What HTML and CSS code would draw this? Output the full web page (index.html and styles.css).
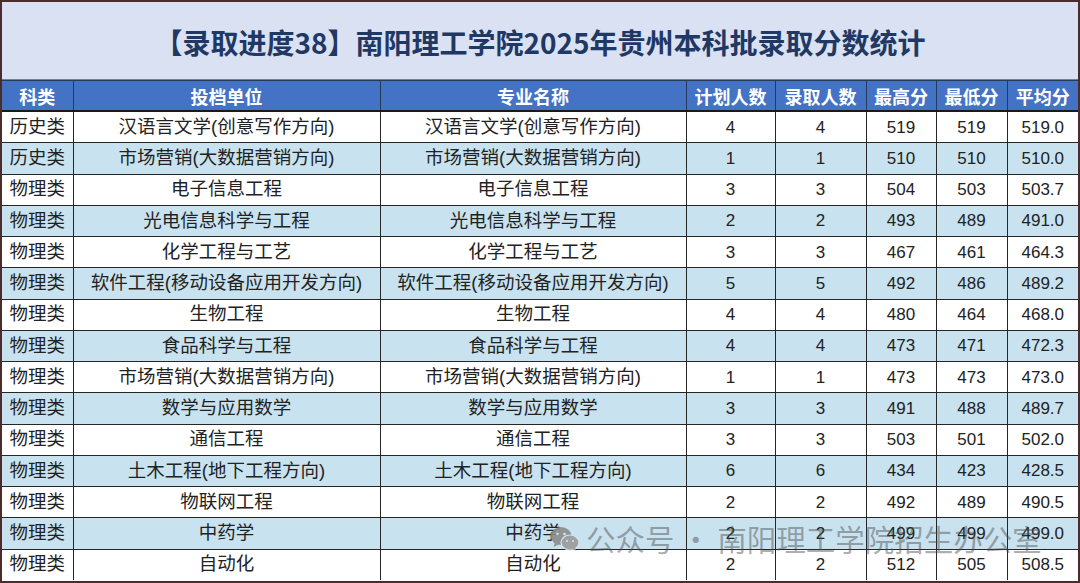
FILE: index.html
```html
<!DOCTYPE html>
<html lang="zh">
<head>
<meta charset="utf-8">
<link rel="stylesheet" href="styles.css">
</head>
<body>
<div class="frame">
  <div class="title">【录取进度38】南阳理工学院2025年贵州本科批录取分数统计</div>
  <table class="grid">
    <colgroup>
      <col class="c1"><col class="c2"><col class="c3"><col class="c4"><col class="c5"><col class="c6"><col class="c7"><col class="c8">
    </colgroup>
    <thead>
      <tr><th>科类</th><th>投档单位</th><th>专业名称</th><th>计划人数</th><th>录取人数</th><th>最高分</th><th>最低分</th><th>平均分</th></tr>
    </thead>
    <tbody>
      <tr><td>历史类</td><td>汉语言文学(创意写作方向)</td><td>汉语言文学(创意写作方向)</td><td class="n">4</td><td class="n">4</td><td class="n">519</td><td class="n">519</td><td class="n">519.0</td></tr>
      <tr><td>历史类</td><td>市场营销(大数据营销方向)</td><td>市场营销(大数据营销方向)</td><td class="n">1</td><td class="n">1</td><td class="n">510</td><td class="n">510</td><td class="n">510.0</td></tr>
      <tr><td>物理类</td><td>电子信息工程</td><td>电子信息工程</td><td class="n">3</td><td class="n">3</td><td class="n">504</td><td class="n">503</td><td class="n">503.7</td></tr>
      <tr><td>物理类</td><td>光电信息科学与工程</td><td>光电信息科学与工程</td><td class="n">2</td><td class="n">2</td><td class="n">493</td><td class="n">489</td><td class="n">491.0</td></tr>
      <tr><td>物理类</td><td>化学工程与工艺</td><td>化学工程与工艺</td><td class="n">3</td><td class="n">3</td><td class="n">467</td><td class="n">461</td><td class="n">464.3</td></tr>
      <tr><td>物理类</td><td>软件工程(移动设备应用开发方向)</td><td>软件工程(移动设备应用开发方向)</td><td class="n">5</td><td class="n">5</td><td class="n">492</td><td class="n">486</td><td class="n">489.2</td></tr>
      <tr><td>物理类</td><td>生物工程</td><td>生物工程</td><td class="n">4</td><td class="n">4</td><td class="n">480</td><td class="n">464</td><td class="n">468.0</td></tr>
      <tr><td>物理类</td><td>食品科学与工程</td><td>食品科学与工程</td><td class="n">4</td><td class="n">4</td><td class="n">473</td><td class="n">471</td><td class="n">472.3</td></tr>
      <tr><td>物理类</td><td>市场营销(大数据营销方向)</td><td>市场营销(大数据营销方向)</td><td class="n">1</td><td class="n">1</td><td class="n">473</td><td class="n">473</td><td class="n">473.0</td></tr>
      <tr><td>物理类</td><td>数学与应用数学</td><td>数学与应用数学</td><td class="n">3</td><td class="n">3</td><td class="n">491</td><td class="n">488</td><td class="n">489.7</td></tr>
      <tr><td>物理类</td><td>通信工程</td><td>通信工程</td><td class="n">3</td><td class="n">3</td><td class="n">503</td><td class="n">501</td><td class="n">502.0</td></tr>
      <tr><td>物理类</td><td>土木工程(地下工程方向)</td><td>土木工程(地下工程方向)</td><td class="n">6</td><td class="n">6</td><td class="n">434</td><td class="n">423</td><td class="n">428.5</td></tr>
      <tr><td>物理类</td><td>物联网工程</td><td>物联网工程</td><td class="n">2</td><td class="n">2</td><td class="n">492</td><td class="n">489</td><td class="n">490.5</td></tr>
      <tr><td>物理类</td><td>中药学</td><td>中药学</td><td class="n">2</td><td class="n">2</td><td class="n">499</td><td class="n">499</td><td class="n">499.0</td></tr>
      <tr><td>物理类</td><td>自动化</td><td>自动化</td><td class="n">2</td><td class="n">2</td><td class="n">512</td><td class="n">505</td><td class="n">508.5</td></tr>
    </tbody>
  </table>
  <div class="watermark">
    <svg class="wm-icon" width="30" height="26" viewBox="0 0 30 26">
      <ellipse cx="11" cy="10" rx="10.5" ry="9" fill="#8c8c8c"/>
      <path d="M5 16 L3.5 21 L9.5 18 Z" fill="#8c8c8c"/>
      <ellipse cx="20" cy="16.5" rx="9" ry="7.5" fill="#9a9a9a" stroke="#d5e6ee" stroke-width="1.2"/>
      <path d="M25 21.5 L26.5 25 L22 23 Z" fill="#9a9a9a"/>
      <circle cx="7.5" cy="8" r="1.3" fill="#d5e6ee"/>
      <circle cx="14.5" cy="8" r="1.3" fill="#d5e6ee"/>
      <circle cx="17" cy="15" r="1" fill="#d5e6ee"/>
      <circle cx="23" cy="15" r="1" fill="#d5e6ee"/>
    </svg>
    <span class="wm-text">公众号 · 南阳理工学院招生办公室</span>
  </div>
</div>
</body>
</html>
```

FILE: styles.css
```css
html, body {
  margin: 0;
  padding: 0;
  background: #ffffff;
}

.frame {
  position: relative;
  width: 1080px;
  height: 583px;
  box-sizing: border-box;
  border: 2px solid #4a2c2c;
  background: #ffffff;
  font-family: "Liberation Sans", "Noto Sans CJK SC", sans-serif;
  color: #222222;
  overflow: hidden;
}

.title {
  height: 78px;
  box-sizing: border-box;
  background: #d9e1f2;
  border-bottom: 1px solid #7a7f8c;
  display: flex;
  align-items: center;
  justify-content: center;
  padding-top: 2px;
  font-family: "Noto Sans CJK SC", sans-serif;
  font-weight: 700;
  font-size: 28px;
  color: #1f3864;
  letter-spacing: 0;
}

.grid {
  width: 1076px;
  border-collapse: collapse;
  table-layout: fixed;
}

.c1 { width: 71px; }
.c2 { width: 307px; }
.c3 { width: 306px; }
.c4 { width: 89px; }
.c5 { width: 91px; }
.c6 { width: 70px; }
.c7 { width: 71px; }
.c8 { width: 71px; }

.grid th {
  height: 29px;
  padding: 0;
  background: #4472c4;
  color: #ffffff;
  font-family: "Noto Sans CJK SC", sans-serif;
  font-weight: 700;
  font-size: 18px;
  line-height: 1;
  text-align: center;
  border: 1px solid #263a5e;
  border-bottom: 2px solid #1a1a1a;
}

.grid td {
  height: 30.25px;
  padding: 0;
  text-align: center;
  font-size: 18.5px;
  line-height: 1;
  border: 1px solid #262626;
  border-top-width: 1.5px;
  white-space: nowrap;
}

.grid th:first-child, .grid td:first-child { border-left: none; }
.grid th:last-child, .grid td:last-child { border-right: none; }
.grid tbody tr:last-child td { border-bottom: none; }

.grid td.n {
  font-size: 17px;
  font-family: "Liberation Sans", sans-serif;
}

.grid tbody tr:nth-child(even) td {
  background: #c9e2ef;
}

.watermark {
  position: absolute;
  left: 548px;
  top: 522px;
  display: flex;
  align-items: center;
  gap: 6px;
  pointer-events: none;
}

.wm-icon {
  display: block;
  opacity: 0.9;
}

.wm-text {
  font-family: "Noto Sans CJK SC", sans-serif;
  font-size: 29.5px;
  line-height: 1;
  color: rgba(70, 70, 70, 0.45);
  letter-spacing: 0;
}
```
